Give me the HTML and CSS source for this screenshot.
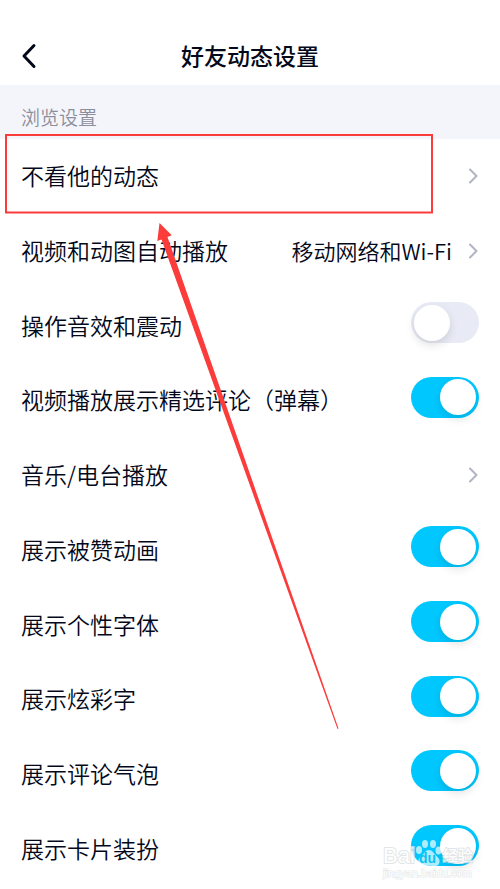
FILE: index.html
```html
<!DOCTYPE html>
<html lang="zh-CN">
<head>
<meta charset="utf-8">
<meta name="viewport" content="width=device-width, initial-scale=1">
<title>好友动态设置</title>
<link rel="stylesheet" href="styles.css">
</head>
<body>
<header class="topbar">
  <button class="back" type="button" aria-label="返回">
    <svg width="16" height="26" viewBox="0 0 16 26"><path d="M13 2.5 3 13l10 10.500"/></svg>
  </button>
  <h1 class="title">好友动态设置</h1>
</header>
<main class="settings">
  <h2 class="section">浏览设置</h2>
  <div class="list">
    <a class="row" href="#hide"><span class="name">不看他的动态</span><svg class="chevron" width="10" height="16" viewBox="0 0 10 16"><path d="m1 1.500 6.500 6.500-6.500 6.500"/></svg></a>
    <a class="row" href="#autoplay"><span class="name">视频和动图自动播放</span><span class="value">移动网络和Wi-Fi</span><svg class="chevron" width="10" height="16" viewBox="0 0 10 16"><path d="m1 1.500 6.500 6.500-6.500 6.500"/></svg></a>
    <label class="row"><span class="name">操作音效和震动</span><input class="switch" type="checkbox"></label>
    <label class="row"><span class="name">视频播放展示精选评论（弹幕）</span><input class="switch" type="checkbox" checked></label>
    <a class="row" href="#music"><span class="name">音乐/电台播放</span><svg class="chevron" width="10" height="16" viewBox="0 0 10 16"><path d="m1 1.500 6.500 6.500-6.500 6.500"/></svg></a>
    <label class="row"><span class="name">展示被赞动画</span><input class="switch" type="checkbox" checked></label>
    <label class="row"><span class="name">展示个性字体</span><input class="switch" type="checkbox" checked></label>
    <label class="row"><span class="name">展示炫彩字</span><input class="switch" type="checkbox" checked></label>
    <label class="row"><span class="name">展示评论气泡</span><input class="switch" type="checkbox" checked></label>
    <label class="row"><span class="name">展示卡片装扮</span><input class="switch" type="checkbox" checked></label>
  </div>
</main>
<svg class="marks" width="440" height="740" viewBox="0 0 440 740" aria-hidden="true">
  <rect x="6" y="135" width="426" height="77.500"/>
  <path d="M159.500 223 171.800 235.300 167.500 237 338.500 728.500 337.500 729 161.500 239.500 157.300 241Z"/>
</svg>
<div class="watermark">
  <div class="brand">
    <span>Bai</span>
    <svg class="paw" width="28" height="28" viewBox="0 0 28 28" aria-hidden="true">
      <ellipse cx="4" cy="11" rx="3" ry="4"/>
      <ellipse cx="10" cy="5" rx="3" ry="4"/>
      <ellipse cx="18" cy="5" rx="3" ry="4"/>
      <ellipse cx="23.500" cy="11.500" rx="3" ry="4"/>
      <path d="M14 11c3 0 4.500 3 6.500 5s4.500 3.500 4 7c-.6 4-4 4.500-6.500 4-2.500-.4-5.500-.4-8 0-3 .5-6-.5-6.500-4-.5-3.200 2-5 4-7s3.500-5 6.500-5Z"/>
    </svg>
    <span class="du">du</span>
    <span class="cn">经验</span>
  </div>
  <div class="site">jingyan.baidu.com</div>
</div>
</body>
</html>
```
FILE: styles.css
```css
* {
  box-sizing: border-box;
}

body {
  position: relative;
  display: flex;
  flex-direction: column;
  min-height: 100vh;
  margin: 0;
  background: #fff;
  color: #03081a;
  font-family: "Noto Sans CJK SC", sans-serif;
}

.topbar {
  display: grid;
  grid-template-columns: 60px 1fr 60px;
  align-items: center;
  height: 85px;
  padding-top: 26px;
}

.back {
  display: flex;
  align-items: center;
  height: 44px;
  padding: 0 0 0 21px;
  border: 0;
  background: none;
}

.back path {
  fill: none;
  stroke: #03081a;
  stroke-width: 3;
  stroke-linecap: round;
  stroke-linejoin: round;
}

.title {
  margin: 0;
  padding-bottom: 2px;
  font-size: 23px;
  font-weight: 500;
  line-height: 32px;
  text-align: center;
}

.settings {
  display: flex;
  flex: 1;
  flex-direction: column;
}

.section {
  height: 54px;
  margin: 0;
  padding: 18px 21px 0;
  background: #f4f5fa;
  color: #8b8e9d;
  font-size: 19px;
  font-weight: 350;
  line-height: 28px;
}

.list {
  display: grid;
  flex: 1;
  grid-auto-rows: 1fr;
  padding-bottom: 3px;
}

.row {
  display: flex;
  align-items: center;
  min-height: 64px;
  padding: 0 21px;
  color: inherit;
  font-size: 23px;
  font-weight: 350;
  line-height: 34px;
  text-decoration: none;
}

.name,
.value {
  padding-bottom: 2px;
  white-space: nowrap;
}

.name {
  flex: 1;
}

.value {
  margin-right: 17px;
  font-size: 22px;
}

.chevron path {
  fill: none;
  stroke: #b1b4c1;
  stroke-width: 2;
  stroke-linecap: round;
  stroke-linejoin: round;
}

.switch {
  display: flex;
  align-items: center;
  width: 68px;
  height: 41px;
  margin: 0 0 6px;
  padding: 0 3px;
  border-radius: 21px;
  background: #e8ebf5;
  appearance: none;
}

.switch::before {
  width: 36px;
  height: 36px;
  border-radius: 50%;
  background: #fff;
  box-shadow: 0 4px 10px rgba(0, 0, 0, 0.12);
  content: "";
}

.switch:checked {
  justify-content: flex-end;
  background: #00c8ff;
}

.marks {
  position: absolute;
  top: 0;
  left: 0;
  pointer-events: none;
}

.marks rect {
  fill: none;
  stroke: #fc3b3b;
  stroke-width: 2;
}

.marks path {
  fill: #fc3b3b;
}

.watermark {
  position: absolute;
  right: 26px;
  bottom: 10px;
  width: 91px;
  color: #fff;
  font-family: "Liberation Sans", "Noto Sans CJK SC", sans-serif;
  opacity: 0.8;
  paint-order: stroke;
  pointer-events: none;
  -webkit-text-stroke: 2px #dcdfe2;
}

.brand {
  position: relative;
  display: flex;
  align-items: flex-end;
  height: 30px;
  font-size: 22px;
  line-height: 22px;
}

.paw {
  fill: #fff;
  fill-opacity: 0.85;
}

.du {
  position: absolute;
  bottom: 0;
  left: 36px;
  color: #14bff0;
  font-size: 14px;
  font-weight: 700;
  line-height: 18px;
  -webkit-text-stroke: 0;
}

.cn {
  font-size: 15px;
  font-weight: 500;
}

.site {
  font-size: 11px;
  line-height: 12px;
  -webkit-text-stroke: 1px #dcdfe2;
}
```
